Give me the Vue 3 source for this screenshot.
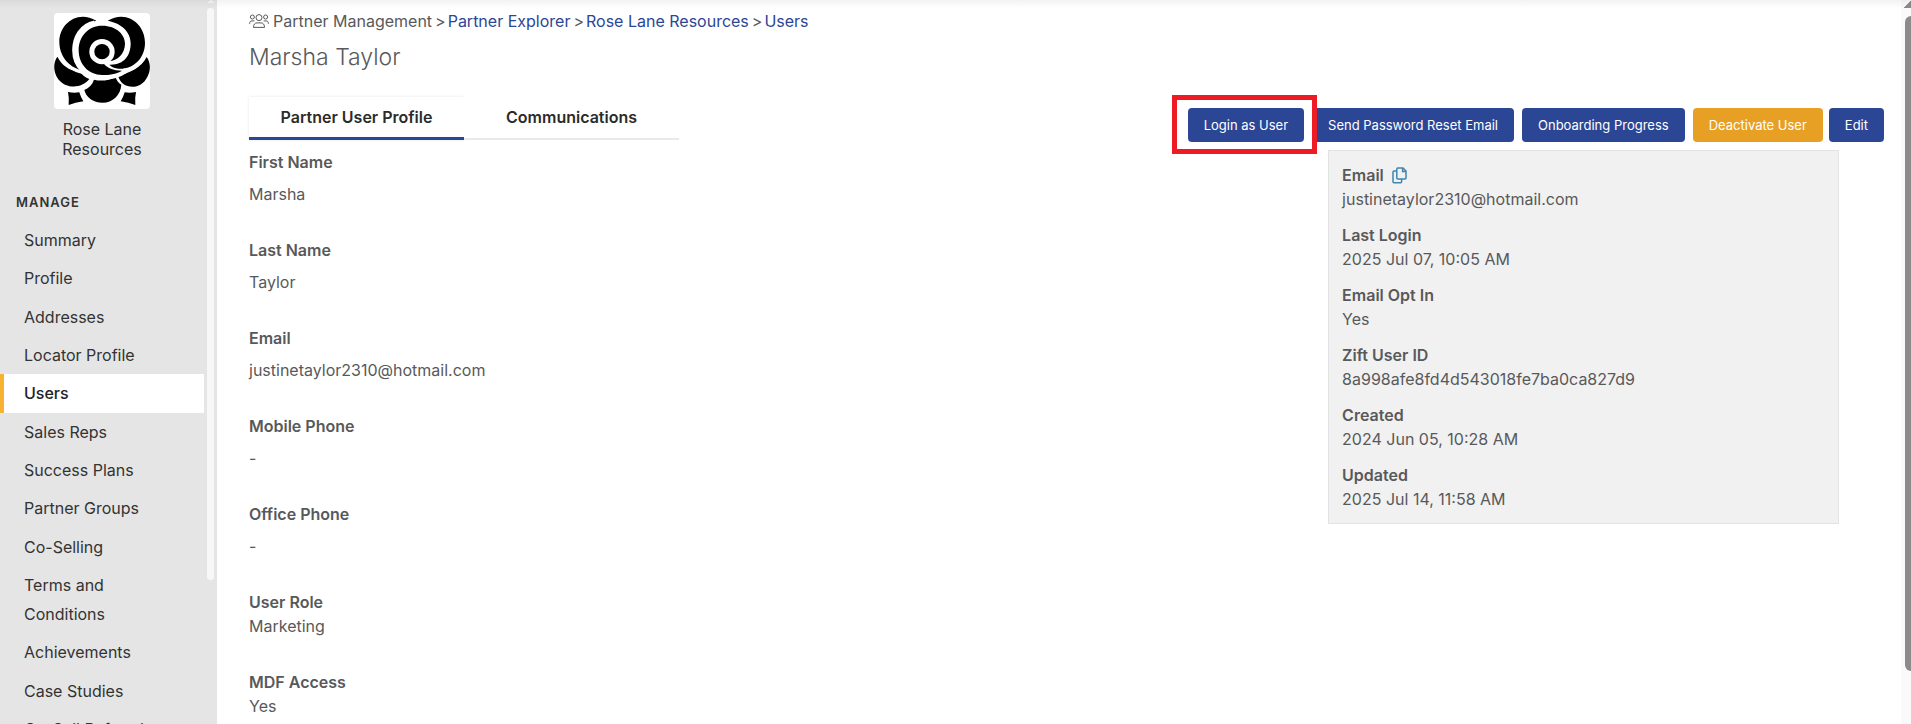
<script setup>
import { ref } from 'vue'

const navItems = [
  'Summary',
  'Profile',
  'Addresses',
  'Locator Profile',
  'Users',
  'Sales Reps',
  'Success Plans',
  'Partner Groups',
  'Co-Selling',
  'Terms and Conditions',
  'Achievements',
  'Case Studies',
  'Co-Sell Referral'
]

const crumbs = ['Partner Explorer', 'Rose Lane Resources', 'Users']

const tabs = ['Partner User Profile', 'Communications']
const activeTab = ref('Partner User Profile')

const fields = [
  { label: 'First Name', value: 'Marsha' },
  { label: 'Last Name', value: 'Taylor' },
  { label: 'Email', value: 'justinetaylor2310@hotmail.com' },
  { label: 'Mobile Phone', value: '-' },
  { label: 'Office Phone', value: '-' },
  { label: 'User Role', value: 'Marketing', compact: true },
  { label: 'MDF Access', value: 'Yes', compact: true }
]

const details = [
  { label: 'Email', value: 'justinetaylor2310@hotmail.com', copy: true },
  { label: 'Last Login', value: '2025 Jul 07, 10:05 AM' },
  { label: 'Email Opt In', value: 'Yes' },
  { label: 'Zift User ID', value: '8a998afe8fd4d543018fe7ba0ca827d9' },
  { label: 'Created', value: '2024 Jun 05, 10:28 AM' },
  { label: 'Updated', value: '2025 Jul 14, 11:58 AM' }
]

function copyValue(value) {
  navigator.clipboard?.writeText(value)
}
</script>

<template>
  <div class="page">
    <!-- Sidebar -->
    <aside class="sidebar">
      <div class="sidebar-content">
        <div class="partner">
          <svg class="partner-logo" viewBox="6 6 288 288" aria-hidden="true">
            <rect x="6" y="6" width="288" height="288" fill="#fff" />
            <path d="M48 243 Q65 247 82 244 Q86 258 94 271 Q70 274 50 282 Q52 262 48 243Z" />
            <path d="M252 243 Q235 247 218 244 Q214 258 206 271 Q230 274 250 282 Q248 262 252 243Z" />
            <path d="M97 237 C111 231 121 221 126 206 C150 212 170 208 190 197 C194 208 199 216 208 221 C206 252 182 275 152 275 C122 275 102 258 97 237Z" />
            <path d="M16 137 C3 155 3 185 20 206 C45 235 90 232 112 204 C100 200 90 192 82 181 C50 180 28 160 16 137Z" />
            <path d="M284 138 C297 155 296 180 286 198 C270 230 236 234 214 219 C207 213 201 205 198 194 C235 185 268 170 284 138Z" />
            <path class="petal" d="M133 29 C75 -5 22 40 22 92 C22 135 50 168 88 177 C45 135 55 50 133 29Z" />
            <path class="petal" d="M167 29 C225 -5 279 40 279 95 C279 145 240 176 200 173 C188 172 178 167 172 161 C215 163 236 135 236 97 C236 60 205 36 167 29Z" />
            <path class="halo" d="M128 36 C88 44 68 80 68 118 C68 168 105 199 150 199 C180 199 205 190 222 178" />
            <path d="M150 44 C195 44 219 72 219 98 C219 128 195 150 172 150 L150 152 C165 172 185 178 210 179 C192 190 170 192 150 192 C110 192 80 160 80 118 C80 75 110 44 150 44Z" />
            <circle cx="150" cy="122" r="38" fill="#fff" />
            <circle cx="150" cy="122" r="23" />
          </svg>
          <div class="partner-name">Rose Lane Resources</div>
        </div>

        <h2 class="nav-heading">Manage</h2>
        <nav class="nav">
          <a
            v-for="item in navItems"
            :key="item"
            href="#"
            class="nav-item"
            :class="{ active: item === 'Users' }"
          >{{ item }}</a>
        </nav>
      </div>
      <div class="sidebar-scroll">
        <span class="sidebar-scroll-arrow"></span>
        <span class="sidebar-scroll-thumb"></span>
      </div>
    </aside>

    <!-- Main content -->
    <main class="main">
      <div class="breadcrumb">
        <svg class="icon-group" viewBox="0 0 20 14" aria-hidden="true">
          <circle cx="10" cy="3.6" r="3" />
          <circle cx="3.4" cy="3" r="2" />
          <circle cx="16.6" cy="3" r="2" />
          <path d="M4.5 13.4 C4.5 10.2 6 8.9 8 8.9 H12 C14 8.9 15.5 10.2 15.5 13.4 Z" />
          <path d="M.6 9.8 C.6 7.8 1.4 6.9 3 6.9 H5.4" />
          <path d="M19.4 9.8 C19.4 7.8 18.6 6.9 17 6.9 H14.6" />
        </svg>
        <span>Partner Management</span>
        <template v-for="crumb in crumbs" :key="crumb">
          <span class="separator">&gt;</span>
          <a href="#">{{ crumb }}</a>
        </template>
      </div>
      <h1 class="title">Marsha Taylor</h1>

      <div class="toolbar">
        <div class="tabs" role="tablist">
          <button
            v-for="tab in tabs"
            :key="tab"
            type="button"
            role="tab"
            class="tab"
            :class="{ active: tab === activeTab }"
            :aria-selected="tab === activeTab"
            @click="activeTab = tab"
          >{{ tab }}</button>
        </div>

        <div class="actions">
          <div class="highlighted">
            <button type="button" class="btn btn-primary">Login as User</button>
          </div>
          <button type="button" class="btn btn-primary">Send Password Reset Email</button>
          <button type="button" class="btn btn-primary">Onboarding Progress</button>
          <div class="btn-pair">
            <button type="button" class="btn btn-warning">Deactivate User</button>
            <button type="button" class="btn btn-primary">Edit</button>
          </div>
        </div>
      </div>

      <div class="columns">
        <dl class="fields">
          <div v-for="field in fields" :key="field.label" class="field" :class="{ compact: field.compact }">
            <dt>{{ field.label }}</dt>
            <dd>{{ field.value }}</dd>
          </div>
        </dl>

        <dl class="details">
          <div v-for="detail in details" :key="detail.label">
            <dt>
              {{ detail.label }}
              <button
                v-if="detail.copy"
                type="button"
                class="btn-copy"
                aria-label="Copy email"
                @click="copyValue(detail.value)"
              >
                <svg viewBox="0 0 15 17" aria-hidden="true">
                  <path d="M5.8 1 H11 L14 4 V11 Q14 12 13 12 H5.8 Q4.8 12 4.8 11 V2 Q4.8 1 5.8 1Z" />
                  <path d="M10.6 1 V4.4 H14" />
                  <path d="M4.8 4 H2 Q1 4 1 5 V14.8 Q1 15.8 2 15.8 H8.6 Q9.6 15.8 9.6 14.8 V12" />
                </svg>
              </button>
            </dt>
            <dd>{{ detail.value }}</dd>
          </div>
        </dl>
      </div>
    </main>

    <div class="page-scroll">
      <span class="page-scroll-arrow"></span>
      <span class="page-scroll-thumb"></span>
    </div>
    <div class="top-shadow"></div>
  </div>
</template>

<style>
body {
  margin: 0;
  overflow: hidden;
}
</style>

<style scoped>
.page {
  position: relative;
  display: flex;
  height: 100vh;
  overflow: hidden;
  background: #fff;
  color: #58595b;
  font-family: Inter, "Liberation Sans", sans-serif;
  font-size: 16px;
  line-height: 24px;
}

a {
  color: #2c4696;
  text-decoration: none;
}

dl,
dd {
  margin: 0;
}

dt {
  font-weight: 600;
}

button {
  font-family: inherit;
  cursor: pointer;
}

/* Sidebar */
.sidebar {
  display: flex;
  flex: none;
  width: 217px;
  background: #e5e5e5;
  color: #333;
}

.sidebar-content {
  flex: 1;
}

.partner {
  padding: 13px 32px 0;
  text-align: center;
}

.partner-logo {
  display: block;
  width: 96px;
  height: 96px;
  margin: 0 auto 10px;
  border-radius: 4px;
}

.petal {
  stroke: #fff;
  stroke-width: 22px;
  paint-order: stroke;
}

.halo {
  fill: none;
  stroke: #fff;
  stroke-width: 15px;
}

.partner-name {
  line-height: 20px;
}

.nav-heading {
  margin: 33px 0 9px 16px;
  font-size: 13px;
  font-weight: 600;
  line-height: 20px;
  letter-spacing: 1px;
  text-transform: uppercase;
}

.nav-item {
  display: block;
  padding: 5px 32px 4px 20px;
  border-left: 4px solid transparent;
  color: #333;
  line-height: 29px;
}

.nav-item:nth-child(3n + 2) {
  padding-bottom: 5px;
}

.nav-item.active {
  border-left-color: #f7b232;
  background: #fff;
  color: #222;
  font-weight: 500;
}

.sidebar-scroll {
  display: flex;
  flex-direction: column;
  align-items: center;
  width: 13px;
}

.sidebar-scroll-arrow {
  height: 3px;
  border: 4px solid transparent;
  border-top: 0;
  border-bottom: 3px solid #f7f7f7;
  box-sizing: border-box;
}

.sidebar-scroll-thumb {
  width: 7px;
  height: 79%;
  margin-top: 5px;
  border-radius: 4px;
  background: #f7f7f7;
}

/* Main */
.main {
  flex: 1;
  min-width: 0;
  padding: 9px 17px 0 32px;
}

.breadcrumb {
  display: flex;
  align-items: center;
}

.separator {
  margin: 0 2px 0 3px;
}

.icon-group {
  width: 20px;
  height: 14px;
  margin-right: 4px;
  fill: none;
  stroke: #58595b;
  stroke-width: 1;
}

.title {
  margin: 8px 0 24px;
  font-size: 23px;
  font-weight: 300;
  line-height: 32px;
}

.toolbar {
  display: flex;
  justify-content: space-between;
  margin-bottom: 8px;
}

.tabs {
  display: grid;
  grid-template-columns: 215px 215px;
  height: 43px;
}

.tab {
  padding: 0 0 1px;
  border: 0;
  border-bottom: 2px solid #e9e9e9;
  background: #fff;
  color: #2b2b2b;
  font-size: 16px;
  font-weight: 600;
}

.tab.active {
  padding: 0;
  border-bottom: 3px solid #2c4696;
  box-shadow: 0 0 3px rgba(0, 0, 0, 0.1);
}

.actions {
  display: flex;
  gap: 8px;
  padding-top: 11px;
}

.btn-pair {
  display: flex;
  gap: 6px;
}

.btn {
  height: 34px;
  padding: 0 16px;
  border: 0;
  border-radius: 4px;
  color: #fff;
  font-size: 13px;
  font-weight: 400;
  white-space: nowrap;
}

.btn-primary {
  background: #2c4696;
}

.btn-warning {
  background: #e8a024;
}

.highlighted {
  position: relative;
}

.highlighted::after {
  content: "";
  position: absolute;
  inset: -13px -13px -12px -16px;
  border: 5px solid #ed1c24;
  pointer-events: none;
}

/* Profile columns */
.columns {
  display: grid;
  grid-template-columns: 66% 34%;
  align-items: start;
}

.field {
  margin-bottom: 32px;
}

.field dd {
  margin-top: 8px;
}

.field.compact dd {
  margin-top: 0;
}

.details {
  display: grid;
  gap: 12px;
  margin-right: 45px;
  padding: 12px 13px;
  border: 1px solid #e3e3e3;
  background: #f1f1f1;
}

.details dt {
  display: flex;
  align-items: center;
  gap: 8px;
}

.btn-copy {
  padding: 0;
  border: 0;
  background: none;
}

.btn-copy svg {
  display: block;
  width: 15px;
  height: 17px;
  fill: none;
  stroke: #3d85b0;
  stroke-width: 1.5;
}

/* Page scrollbar */
.page-scroll {
  display: flex;
  flex-direction: column;
  align-items: flex-end;
  flex: none;
  width: 10px;
  background: #fafafa;
  overflow: hidden;
}

.page-scroll-arrow {
  width: 7px;
  height: 8px;
  background: linear-gradient(135deg, transparent 50%, #8b8b8b 50%);
}

.page-scroll-thumb {
  width: 6px;
  height: 655px;
  margin-top: 8px;
  border-radius: 6px 0 0 6px;
  background: #8b8b8b;
}

.top-shadow {
  position: absolute;
  top: 0;
  left: 0;
  right: 0;
  height: 8px;
  background: linear-gradient(rgba(0, 0, 0, 0.05), transparent);
  pointer-events: none;
}
</style>
